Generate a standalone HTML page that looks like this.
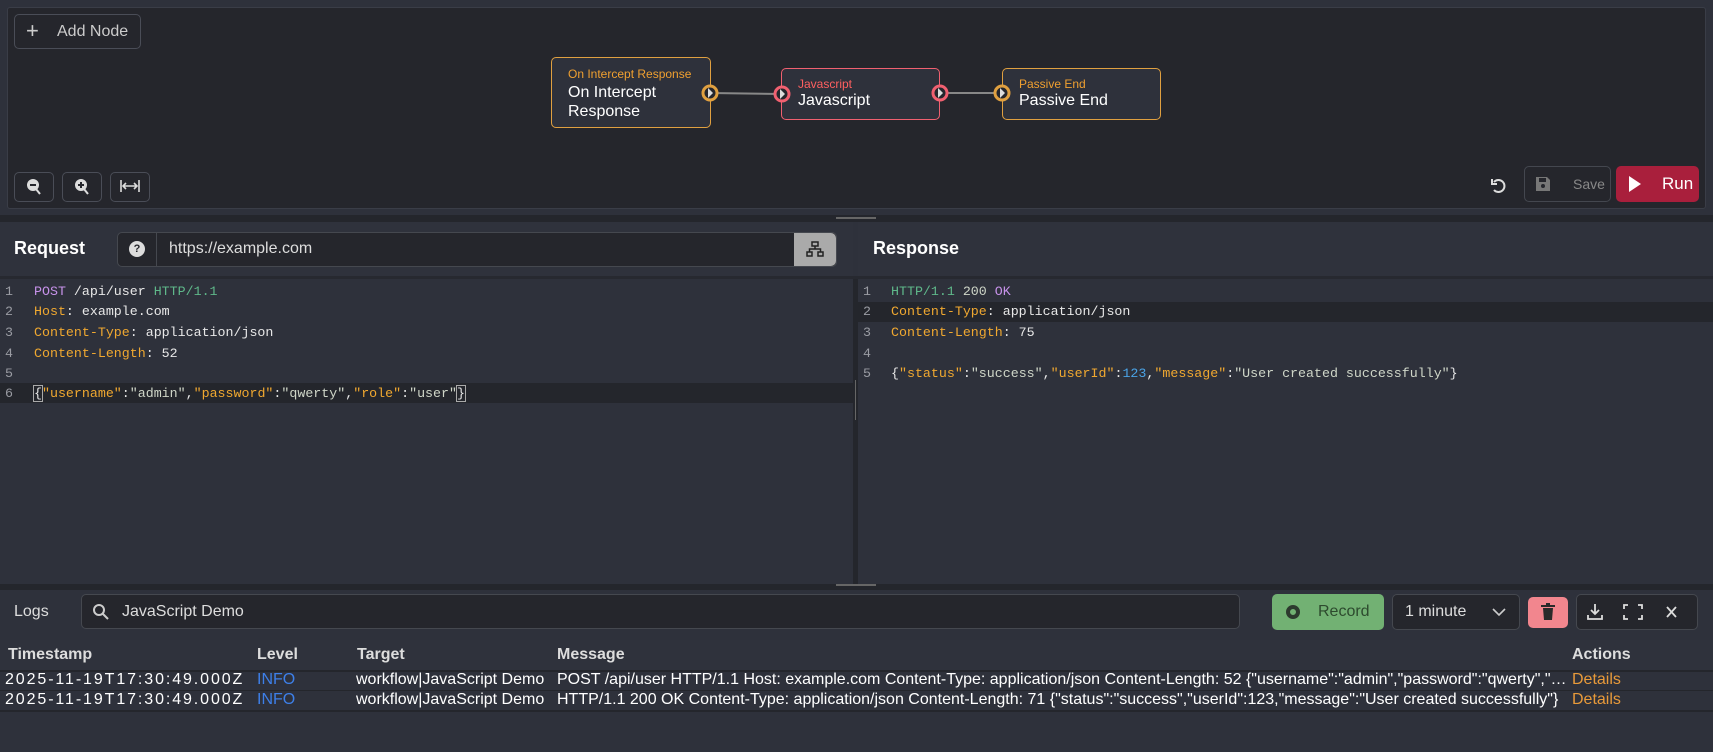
<!DOCTYPE html>
<html><head><meta charset="utf-8"><style>
*{box-sizing:border-box;margin:0;padding:0}
body{width:1713px;height:752px;background:#2e313b;font-family:"Liberation Sans",sans-serif;color:#e6e6e6;position:relative;overflow:hidden}
.abs{position:absolute}
.canvas{left:7px;top:7px;width:1699px;height:202px;background:#25262c;border:1px solid #3a3d47;border-radius:3px}
.btn{position:absolute;border:1px solid #4a4d57;border-radius:5px;background:#25262c;color:#ccc}
.node{position:absolute;background:#2e313b;border-radius:5px}
.node .s{position:absolute;left:16px;font-size:12px}
.node .t{position:absolute;left:16px;font-size:16px;color:#fff;line-height:19px}
.code{font-family:"Liberation Mono",monospace;font-size:13.3px}
.ln{position:absolute;left:5px;color:#9a9ca3}
.cl{position:absolute;left:34px;white-space:pre;color:#e8e8e8}
.k{color:#f0a830}.p{color:#c792ea}.g{color:#5fb88a}.s2{color:#cfd6c8}.n{color:#4aa3e6}
.tbl{font-size:16px;white-space:nowrap}
.ts{letter-spacing:1.9px}
</style></head><body>
<div class="abs canvas"></div>
<div class="btn" style="left:14px;top:14px;width:127px;height:35px;font-size:16px;line-height:33px;padding-left:42px;color:#ccc">Add Node</div>
<div class="abs" style="left:26px;top:22px;font-size:22px;color:#ccc;line-height:18px">+</div>

<svg class="abs" style="left:0;top:0" width="1713" height="210">
<line x1="710" y1="93" x2="781" y2="94" stroke="#888" stroke-width="2"/>
<line x1="940" y1="93" x2="1002" y2="93" stroke="#888" stroke-width="2"/>
</svg>
<div class="node" style="left:551px;top:57px;width:160px;height:71px;border:1px solid #e0a040">
 <div class="s" style="top:9px;color:#f0a030">On Intercept Response</div>
 <div class="t" style="top:25px">On Intercept<br>Response</div></div>
<div class="node" style="left:781px;top:68px;width:159px;height:52px;border:1px solid #f06070">
 <div class="s" style="top:8px;color:#ff6060">Javascript</div>
 <div class="t" style="top:22px">Javascript</div></div>
<div class="node" style="left:1002px;top:68px;width:159px;height:52px;border:1px solid #e0a040">
 <div class="s" style="top:8px;color:#f0a030">Passive End</div>
 <div class="t" style="top:22px">Passive End</div></div>
<svg class="abs" style="left:0;top:0" width="1713" height="210">
<g stroke-width="3" fill="#25262c"><circle cx="710" cy="93" r="7" stroke="#e0a040"/><circle cx="782" cy="94" r="7" stroke="#f06070"/><circle cx="940" cy="93" r="7" stroke="#f06070"/><circle cx="1002" cy="93" r="7" stroke="#e0a040"/></g>
<g fill="#ddd"><path d="M708 88l5 5-5 5z"/><path d="M780 89l5 5-5 5z"/><path d="M938 88l5 5-5 5z"/><path d="M1000 88l5 5-5 5z"/></g>
</svg>

<div class="btn" style="left:14px;top:172px;width:40px;height:30px"></div>
<div class="btn" style="left:62px;top:172px;width:40px;height:30px"></div>
<div class="btn" style="left:110px;top:172px;width:40px;height:30px"></div>
<svg class="abs" style="left:0;top:0" width="160" height="210" stroke="#ddd" fill="none" stroke-width="2">
<circle cx="33" cy="185" r="5" fill="#ddd"/><line x1="36" y1="189" x2="40" y2="194"/><line x1="30" y1="185" x2="36" y2="185" stroke="#25262c"/>
<circle cx="81" cy="185" r="5" fill="#ddd"/><line x1="84" y1="189" x2="88" y2="194"/><path d="M78 185h6M81 182v6" stroke="#25262c"/>
<path d="M121 180v12M139 180v12M123 186h14M126 183l-3 3 3 3M134 183l3 3-3 3" stroke-width="1.6"/>
</svg>
<svg class="abs" style="left:1490px;top:177px" width="18" height="18" fill="none" stroke="#ddd" stroke-width="2"><path d="M4 5a6 6 0 1 1 0 8"/><path d="M2 2v5h5" stroke-width="2"/></svg>
<div class="btn" style="left:1524px;top:166px;width:87px;height:36px;border-color:#44474f;color:#888;font-size:14px;line-height:34px;padding-left:48px">Save</div>
<svg class="abs" style="left:1536px;top:177px" width="14" height="14"><path d="M0 0h11l3 3v11H0z" fill="#777"/><rect x="3" y="1" width="7" height="4" fill="#25262c"/><circle cx="7" cy="9" r="2" fill="#25262c"/></svg>
<div class="abs" style="left:1616px;top:166px;width:83px;height:36px;background:#a91f3c;border-radius:5px;font-size:17px;line-height:36px;padding-left:46px;color:#fff">Run</div>
<svg class="abs" style="left:1628px;top:175px" width="14" height="18"><path d="M1 1l12 8-12 8z" fill="#fff"/></svg>

<div class="abs" style="left:0;top:215px;width:1713px;height:7px;background:#24262c"></div>
<div class="abs" style="left:836px;top:217px;width:40px;height:2px;background:#666"></div>
<div class="abs" style="left:0;top:222px;width:853px;height:54px;background:#2f323c"></div>
<div class="abs" style="left:858px;top:222px;width:855px;height:54px;background:#2f323c"></div>
<div class="abs" style="left:0;top:276px;width:1713px;height:3px;background:#272930"></div>
<div class="abs" style="left:14px;top:238px;font-size:18px;font-weight:bold;color:#fff">Request</div>
<div class="abs" style="left:873px;top:238px;font-size:18px;font-weight:bold;color:#fff">Response</div>
<div class="abs" style="left:117px;top:232px;width:720px;height:35px;background:#25262c;border:1px solid #45484f;border-radius:5px"></div>
<div class="abs" style="left:156px;top:233px;width:1px;height:33px;background:#45484f"></div>
<div class="abs" style="left:129px;top:241px;width:16px;height:16px;border-radius:50%;background:#ddd;color:#25262c;font-size:11px;font-weight:bold;text-align:center;line-height:16px">?</div>
<div class="abs" style="left:169px;top:240px;font-size:16px;color:#ddd">https://example.com</div>
<div class="abs" style="left:794px;top:233px;width:42px;height:33px;background:#aaa;border-radius:0 5px 5px 0"></div>
<svg class="abs" style="left:806px;top:241px" width="18" height="17" fill="none" stroke="#222" stroke-width="1.5"><rect x="6" y="1" width="6" height="4"/><rect x="1" y="11" width="5" height="4"/><rect x="12" y="11" width="5" height="4"/><path d="M9 5v3M3.5 11V8h11v3"/></svg>

<div class="abs" style="left:0;top:279px;width:853px;height:305px;background:#2e313b"></div>
<div class="abs" style="left:853px;top:279px;width:5px;height:305px;background:#24262c"></div>
<div class="abs" style="left:855px;top:380px;width:1px;height:40px;background:#666"></div>
<div class="abs" style="left:0;top:383px;width:853px;height:20px;background:#24262c"></div>
<div class="abs" style="left:858px;top:302px;width:855px;height:20px;background:#24262c"></div>
<div class="code">
<div class="ln" style="top:284px">1</div><div class="cl" style="top:284px"><span class="p">POST</span> /api/user <span class="g">HTTP/1.1</span></div>
<div class="ln" style="top:304px">2</div><div class="cl" style="top:304px"><span class="k">Host</span>: example.com</div>
<div class="ln" style="top:325px">3</div><div class="cl" style="top:325px"><span class="k">Content-Type</span>: application/json</div>
<div class="ln" style="top:346px">4</div><div class="cl" style="top:346px"><span class="k">Content-Length</span>: 52</div>
<div class="ln" style="top:366px">5</div>
<div class="ln" style="top:386px">6</div><div class="cl" style="top:386px"><span style="outline:1px solid #aaa">{</span><span class="k">"username"</span>:<span class="s2">"admin"</span>,<span class="k">"password"</span>:<span class="s2">"qwerty"</span>,<span class="k">"role"</span>:<span class="s2">"user"</span><span style="outline:1px solid #aaa">}</span></div>
</div>
<div class="code" style="position:absolute;left:858px;top:0">
<div class="ln" style="top:284px">1</div><div class="cl" style="top:284px;left:33px"><span class="g">HTTP/1.1</span> <span class="s2">200</span> <span class="p">OK</span></div>
<div class="ln" style="top:304px">2</div><div class="cl" style="top:304px;left:33px"><span class="k">Content-Type</span>: application/json</div>
<div class="ln" style="top:325px">3</div><div class="cl" style="top:325px;left:33px"><span class="k">Content-Length</span>: 75</div>
<div class="ln" style="top:346px">4</div>
<div class="ln" style="top:366px">5</div><div class="cl" style="top:366px;left:33px">{<span class="k">"status"</span>:<span class="s2">"success"</span>,<span class="k">"userId"</span>:<span class="n">123</span>,<span class="k">"message"</span>:<span class="s2">"User created successfully"</span>}</div>
</div>

<div class="abs" style="left:0;top:584px;width:1713px;height:6px;background:#24262c"></div>
<div class="abs" style="left:836px;top:584px;width:40px;height:2px;background:#666"></div>
<div class="abs" style="left:14px;top:603px;font-size:16px;color:#ddd">Logs</div>
<div class="abs" style="left:81px;top:594px;width:1159px;height:35px;background:#25262c;border:1px solid #45484f;border-radius:5px"></div>
<svg class="abs" style="left:92px;top:603px" width="18" height="18" fill="none" stroke="#ccc" stroke-width="2"><circle cx="7" cy="7" r="5"/><path d="M11 11l5 5"/></svg>
<div class="abs" style="left:122px;top:603px;font-size:16px;color:#ddd">JavaScript Demo</div>
<div class="abs" style="left:1272px;top:594px;width:112px;height:36px;background:#72b173;border-radius:5px;font-size:16px;line-height:36px;padding-left:46px;color:#2d4a2e">Record</div>
<div class="abs" style="left:1286px;top:605px;width:14px;height:14px;border-radius:50%;border:4px solid #2d3a2e;background:#72b173"></div>
<div class="abs" style="left:1392px;top:594px;width:128px;height:36px;border:1px solid #45484f;border-radius:5px;background:#25262c;font-size:16px;line-height:34px;padding-left:12px;color:#ddd">1 minute</div>
<svg class="abs" style="left:1492px;top:607px" width="14" height="10" fill="none" stroke="#ccc" stroke-width="1.6"><path d="M1 2l6 6 6-6"/></svg>
<div class="abs" style="left:1528px;top:597px;width:40px;height:31px;background:#f2868e;border-radius:5px"></div>
<svg class="abs" style="left:1541px;top:603px" width="14" height="18" fill="#2a2a2a"><rect x="0" y="2" width="14" height="2"/><rect x="5" y="0" width="4" height="2"/><path d="M2 5h10l-1 12H3z"/></svg>
<div class="abs" style="left:1576px;top:594px;width:122px;height:36px;border:1px solid #45484f;border-radius:5px;background:#25262c"></div>
<svg class="abs" style="left:1586px;top:602px" width="110" height="20" fill="none" stroke="#ddd" stroke-width="1.8"><path d="M9 2v10M5 8l4 4 4-4M2 13v4h14v-4" /><path d="M42 3h-4v4M52 3h4v4M42 17h-4v-4M52 17h4v-4"/><path d="M81 5l9 10M90 5l-9 10"/></svg>

<div class="abs" style="left:0;top:640px;width:1713px;height:30px;background:#2f323c"></div>
<div class="abs" style="left:0;top:670px;width:1713px;height:2px;background:#24262c"></div>
<div class="abs" style="left:0;top:690px;width:1713px;height:1px;background:#24262c"></div>
<div class="abs" style="left:0;top:710px;width:1713px;height:2px;background:#24262c"></div>
<div class="tbl">
<div class="abs" style="left:8px;top:646px;font-weight:bold;color:#ddd">Timestamp</div>
<div class="abs" style="left:257px;top:646px;font-weight:bold;color:#ddd">Level</div>
<div class="abs" style="left:357px;top:646px;font-weight:bold;color:#ddd">Target</div>
<div class="abs" style="left:557px;top:646px;font-weight:bold;color:#ddd">Message</div>
<div class="abs" style="left:1572px;top:646px;font-weight:bold;color:#ddd">Actions</div>
<div class="abs ts" style="left:5px;top:671px;color:#fff">2025-11-19T17:30:49.000Z</div>
<div class="abs" style="left:257px;top:671px;color:#3d7fe8">INFO</div>
<div class="abs" style="left:356px;top:671px;color:#fff">workflow|JavaScript Demo</div>
<div class="abs" style="left:557px;top:671px;color:#fff;width:1013px;overflow:hidden;text-overflow:ellipsis">POST /api/user HTTP/1.1 Host: example.com Content-Type: application/json Content-Length: 52 {"username":"admin","password":"qwerty","role":"user"}</div>
<div class="abs" style="left:1572px;top:671px;color:#e89a3a">Details</div>
<div class="abs ts" style="left:5px;top:691px;color:#fff">2025-11-19T17:30:49.000Z</div>
<div class="abs" style="left:257px;top:691px;color:#3d7fe8">INFO</div>
<div class="abs" style="left:356px;top:691px;color:#fff">workflow|JavaScript Demo</div>
<div class="abs" style="left:557px;top:691px;color:#fff">HTTP/1.1 200 OK Content-Type: application/json Content-Length: 71 {"status":"success","userId":123,"message":"User created successfully"}</div>
<div class="abs" style="left:1572px;top:691px;color:#e89a3a">Details</div>
</div>
</body></html>
